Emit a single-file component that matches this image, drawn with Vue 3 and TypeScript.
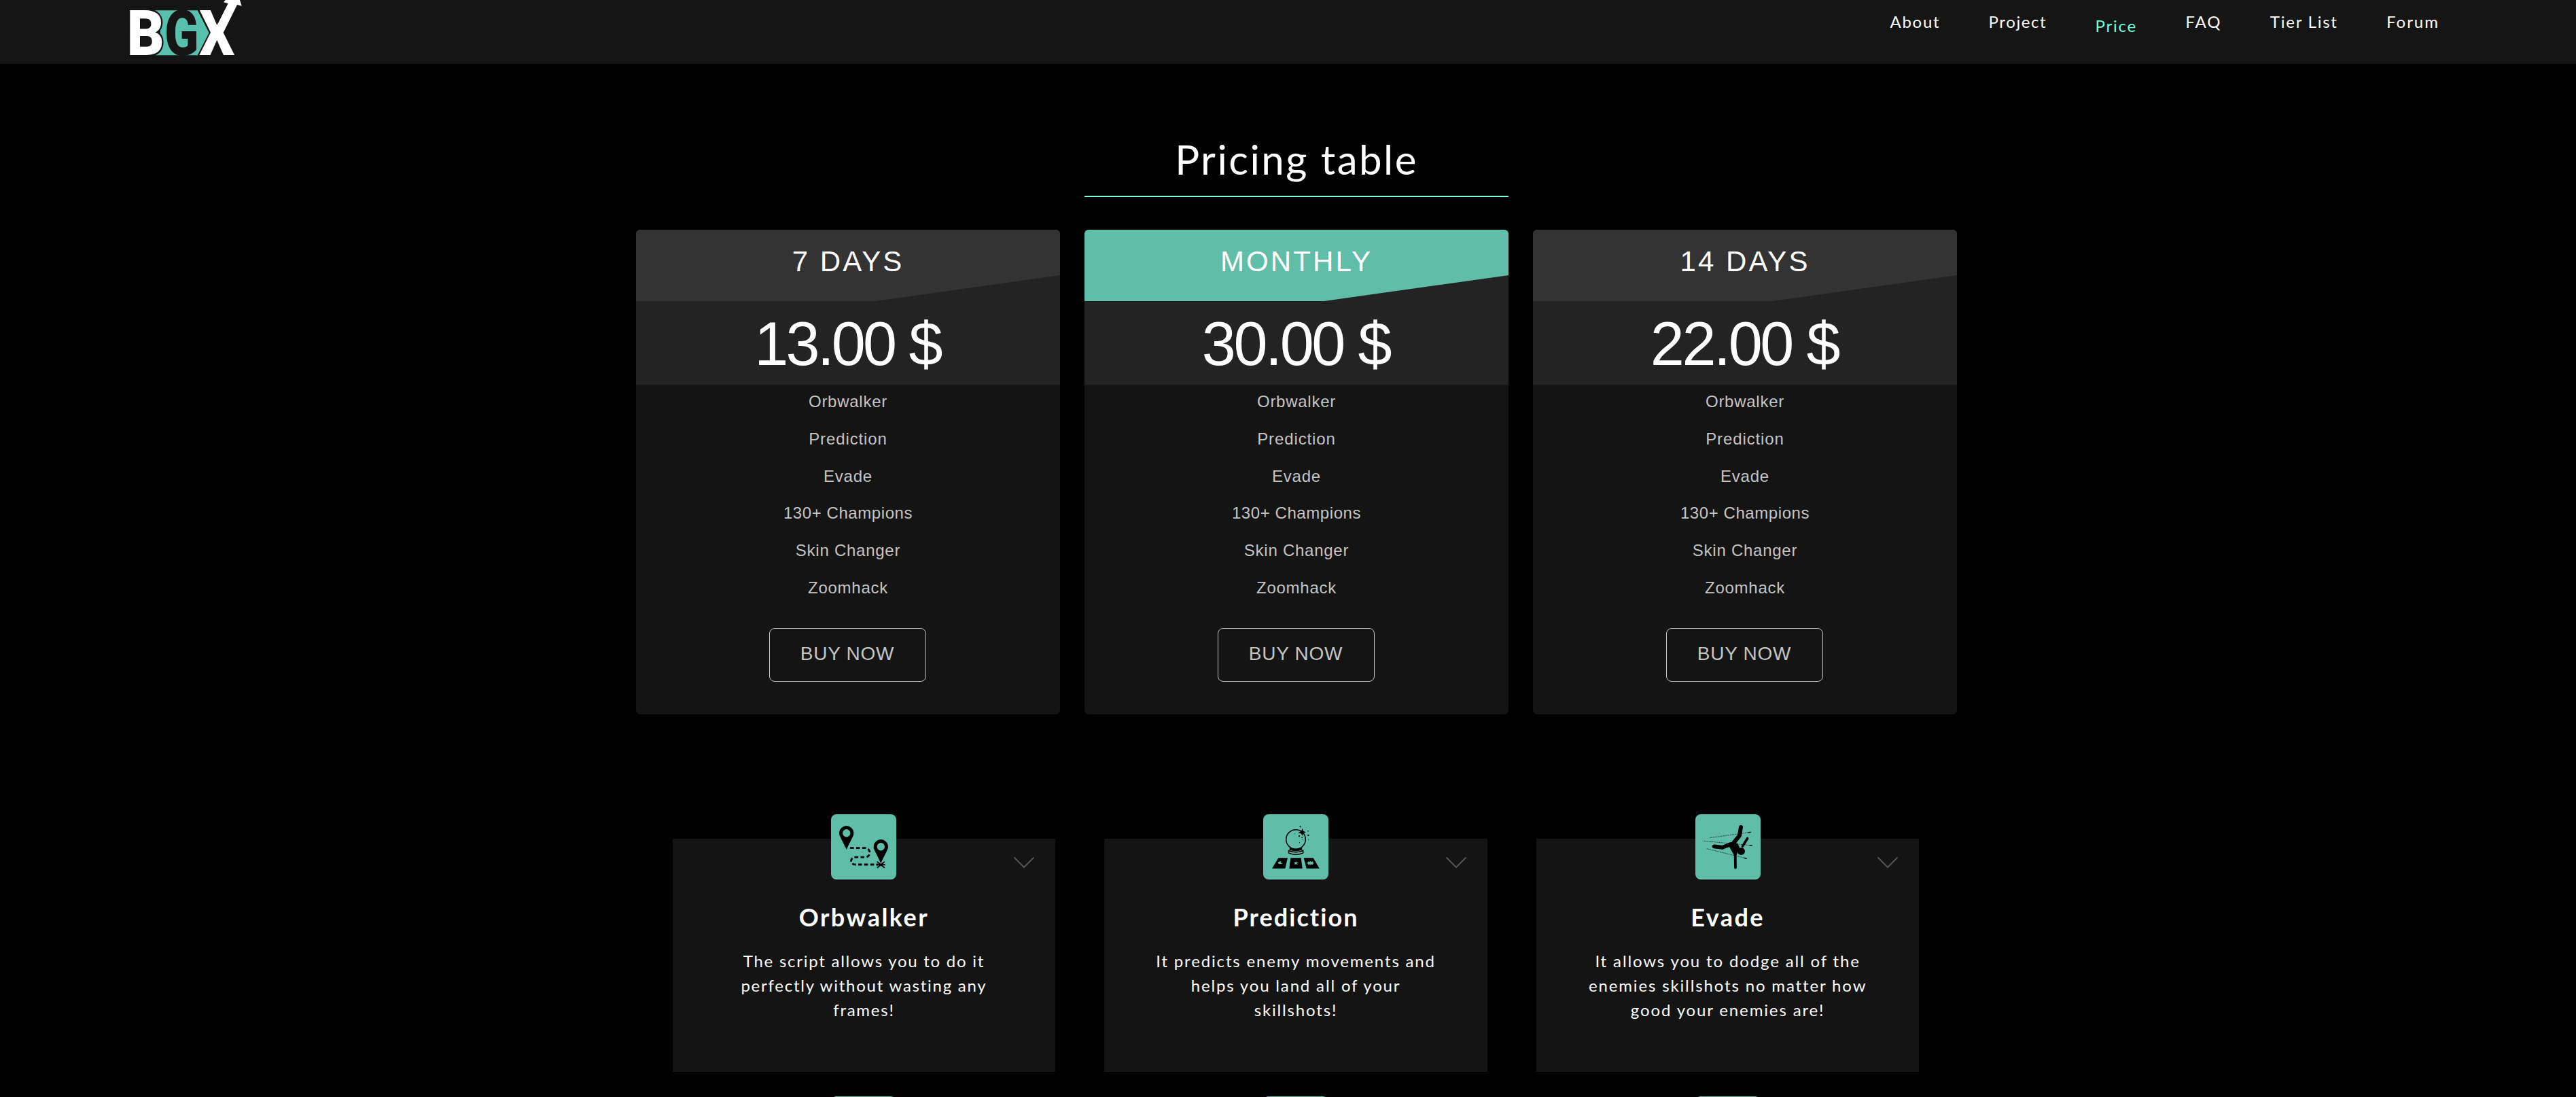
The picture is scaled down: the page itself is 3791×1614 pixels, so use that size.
<script setup lang="ts">
interface NavItem { label: string; spacing: number; active?: boolean }
interface Plan { name: string; price: string; nameSpacing: number; priceSpacing: number; featured?: boolean }
interface Perk { label: string; spacing: number }
interface Feature { icon: 'route' | 'oracle' | 'dodge'; title: string; lines: string[]; titleSpacing: number; spacing: number }

const nav: NavItem[] = [
  { label: 'About', spacing: 1.69 },
  { label: 'Project', spacing: 1.6 },
  { label: 'Price', spacing: 1.77, active: true },
  { label: 'FAQ', spacing: 2.0 },
  { label: 'Tier List', spacing: 1.76 },
  { label: 'Forum', spacing: 2.0 },
]

const plans: Plan[] = [
  { name: '7 DAYS', price: '13.00 $', nameSpacing: 3.05, priceSpacing: -3.8 },
  { name: 'MONTHLY', price: '30.00 $', nameSpacing: 3.13, priceSpacing: -3.4, featured: true },
  { name: '14 DAYS', price: '22.00 $', nameSpacing: 3.05, priceSpacing: -3.4 },
]

const perks: Perk[] = [
  { label: 'Orbwalker', spacing: 0.74 },
  { label: 'Prediction', spacing: 0.9 },
  { label: 'Evade', spacing: 0.74 },
  { label: '130+ Champions', spacing: 0.57 },
  { label: 'Skin Changer', spacing: 0.74 },
  { label: 'Zoomhack', spacing: 0.74 },
]

const features: Feature[] = [
  {
    icon: 'route', title: 'Orbwalker', titleSpacing: 2.47, spacing: 1.75,
    lines: ['The script allows you to do it', 'perfectly without wasting any', 'frames!'],
  },
  {
    icon: 'oracle', title: 'Prediction', titleSpacing: 2.07, spacing: 1.84,
    lines: ['It predicts enemy movements and', 'helps you land all of your', 'skillshots!'],
  },
  {
    icon: 'dodge', title: 'Evade', titleSpacing: 2.42, spacing: 1.86,
    lines: ['It allows you to dodge all of the', 'enemies skillshots no matter how', 'good your enemies are!'],
  },
]
</script>

<template>
  <div class="page">
    <header class="topbar">
      <svg class="logo" width="180" height="94" viewBox="0 0 180 94" aria-label="BGX">
        <path class="teal" d="M44 15.3H106.700L123.700 48.300L106.700 81.300H44L52 46Z" />
        <text class="mark dark" transform="translate(58.3 81.3) scale(.79 1)">G</text>
        <text class="mark light edged" transform="translate(2.7 81.3) scale(.917 1)">B</text>
        <path class="rim" d="M108.300 14L125 48.300L108.300 82.500" />
        <text class="mark light" transform="translate(109.300 81.300) scale(.875 1)">X</text>
        <path class="dark" d="M141 14H147.300L136 36.700Z" />
        <path class="light" d="M135.800 37L151.700 5L145 3.300L153 -6H167L171.700 8.700L165 7L144.700 47.700Z" />
      </svg>
      <nav class="nav">
        <a
          v-for="n in nav"
          :key="n.label"
          :class="{ active: n.active }"
          :style="{ letterSpacing: n.spacing + 'px' }"
        >{{ n.label }}</a>
      </nav>
    </header>

    <main>
      <h1 class="title">Pricing table</h1>

      <section class="plans">
        <article v-for="p in plans" :key="p.name" class="plan" :class="{ featured: p.featured }">
          <div class="plan-head">
            <h2 :style="{ letterSpacing: p.nameSpacing + 'px' }">{{ p.name }}</h2>
          </div>
          <div class="plan-price" :style="{ letterSpacing: p.priceSpacing + 'px' }">{{ p.price }}</div>
          <ul class="perks">
            <li v-for="k in perks" :key="k.label" :style="{ letterSpacing: k.spacing + 'px' }">{{ k.label }}</li>
          </ul>
          <button class="buy" type="button">BUY NOW</button>
        </article>
      </section>

      <section class="features">
        <article v-for="f in features" :key="f.title" class="feature">
          <div class="badge">
            <svg v-if="f.icon === 'route'" width="96" height="96" viewBox="0 0 96 96">
              <g fill-rule="evenodd">
                <path d="M22.700 51.800Q19.500 45 13.600 33.400A10.700 10.700 0 1 1 31.800 33.400Q25.900 45 22.700 51.800ZM22.700 22A5.700 5.700 0 1 0 22.700 33.400A5.700 5.700 0 1 0 22.700 22Z" />
                <path d="M73.300 72Q70.100 65 64.200 53.400A10.700 10.700 0 1 1 82.400 53.400Q76.500 65 73.300 72ZM73.300 42A5.700 5.700 0 1 0 73.300 53.400A5.700 5.700 0 1 0 73.300 42Z" />
              </g>
              <path class="line" stroke-width="2.800" stroke-dasharray="5.600 3.300" d="M28 49.700H50C59 49.700 59.500 63.200 50 63.200H36C27.500 63.200 27.500 74 36 74H69" />
              <path class="line" stroke-width="2" stroke-linecap="round" d="M68.500 70.300L78.200 78.300M78.200 70.300L68.500 78.300M67.500 74.200H79" />
            </svg>
            <svg v-else-if="f.icon === 'oracle'" width="96" height="96" viewBox="0 0 96 96">
              <circle class="line" cx="48" cy="37" r="14.300" stroke-width="1.500" />
              <path d="M39.500 48.500Q48 53.500 56.500 48.500L57.500 52.500Q48 56 38.300 52.500Z" />
              <path class="line" stroke-width="1.500" d="M37.500 53.500Q48 58 58.700 53.500V57Q48 61.500 37.500 57Z" />
              <path d="M22.300 64.300H36L32.300 79.700H13ZM40.300 64.300H55.700L57.700 79.700H38.300ZM59.700 64.300H73.700L82.700 79.700H63.700Z" />
              <path d="M57.700 20.800L58.900 24.600L62.800 26.400L59 27.900L57.500 32L56 28.500L51.500 27L55.800 25Z" />
              <path d="M54.700 16.800L55.300 17.700L56.200 18.300L55.300 18.900L54.700 19.800L54.100 18.900L53.200 18.300L54.100 17.700Z" />
              <g>
                <circle cx="53" cy="32" r="1.200" /><circle cx="66.400" cy="31" r="1.200" />
                <circle cx="66" cy="24.800" r=".8" /><circle cx="57.200" cy="34.400" r=".8" />
                <circle cx="66.700" cy="37.300" r=".5" /><circle cx="58" cy="37.300" r=".5" />
                <circle cx="53.400" cy="41.700" r=".6" /><circle cx="46.700" cy="28.700" r=".5" />
              </g>
              <g class="cut">
                <path d="M26.500 69.200Q21.300 69.300 21.700 71.600Q22.500 74 28.800 72.800Q24.800 71.800 26.500 69.200Z" />
                <path d="M48.200 69L49.200 70.800L52 71L49.800 72.300L50.800 74.200L48.200 73.200L45.700 74.200L46.700 72.300L44.600 71L47.300 70.800Z" />
                <path d="M66 69.500L68 70L69.500 69L71 70L73 69.500L73 71L75 72L73 73L73 74.200L71 73.700L69.500 74.500L68 73.700L66 74.200L66 73L64.500 72L65.500 71Z" />
              </g>
            </svg>
            <svg v-else width="96" height="96" viewBox="0 0 96 96">
              <g class="line" stroke-linecap="round" stroke-linejoin="round">
                <path stroke-width="6" d="M67 19L65 31.300L56 42.500" />
                <path stroke-width="5.800" d="M27.500 47.300L40 48.800L52 44" />
                <path stroke-width="3.800" d="M58.600 56L59 78.500" />
                <path stroke-width="3.600" d="M76.700 35.500L69.500 47" />
              </g>
              <path d="M48.500 45.500L54 41.300L62.300 43L65 48.500L60.600 60H56.800Z" />
              <circle cx="67.400" cy="54.400" r="5.500" />
              <g class="line" stroke-width=".9" stroke-dasharray="1.500 1" opacity=".75">
                <path d="M21 34.700L79 26.700" /><path d="M12.300 39.300L81 45.700" /><path d="M16.700 50.700L73 64.500" />
              </g>
              <path class="line" stroke-width="1.400" d="M77.500 27L81.700 26.300M79.500 45.600L83.700 46M71.500 64.300L75.700 65.200" />
            </svg>
          </div>
          <svg class="chevron" width="32" height="20" viewBox="0 0 32 20"><path d="M1.500 1.500L16 16L30.500 1.500" /></svg>
          <h3 :style="{ letterSpacing: f.titleSpacing + 'px' }">{{ f.title }}</h3>
          <p :style="{ letterSpacing: f.spacing + 'px' }">
            <span v-for="l in f.lines" :key="l">{{ l }}</span>
          </p>
        </article>
        <article v-for="i in 3" :key="i" class="feature"><div class="badge"></div></article>
      </section>
    </main>
  </div>
</template>

<style>
html, body { background: #000; margin: 0; overflow: hidden; }
</style>

<style scoped>
.page {
  width: 3791px;
  height: 1614px;
  overflow: hidden;
  background: #000;
  color: #fff;
  font-family: Lato, "Noto Sans", sans-serif;
}
.topbar {
  display: flex;
  justify-content: space-between;
  align-items: flex-start;
  height: 94px;
  padding: 0 201px 0 184px;
  box-sizing: border-box;
  background: #151515;
}
.logo { display: block; overflow: visible; }
.mark { font: 900 93px Roboto, "Liberation Sans", sans-serif; }
.teal { fill: #57c1ab; }
.light { fill: #fff; }
.dark { fill: #151515; }
.edged { stroke: #151515; stroke-width: 5px; paint-order: stroke; }
.rim { fill: none; stroke: #151515; stroke-width: 2px; }
.nav { display: flex; gap: 71.3px; font-size: 24px; line-height: 64px; }
.nav .active { color: #6fffe0; padding-top: 6px; }

main { width: 1944px; margin-left: 936px; }
.title {
  width: 624px;
  margin: 95px auto 48px;
  padding-bottom: 9px;
  border-bottom: 2px solid #7ffbe0;
  text-align: center;
  font-size: 60px;
  font-weight: 400;
  line-height: 90px;
  letter-spacing: 2.47px;
}
.plans { display: flex; gap: 36px; font-family: "Liberation Sans", Arial, sans-serif; }
.plan {
  width: 624px;
  height: 713px;
  border-radius: 6px;
  overflow: hidden;
  background: #141414;
  text-align: center;
}
.plan-head { height: 105px; background: #232323; }
.plan-head h2 {
  margin: 0;
  height: 105px;
  font-size: 42px;
  font-weight: 400;
  line-height: 93px;
  background: #333;
  clip-path: polygon(0 0, 100% 0, 100% 67px, 353px 100%, 0 100%);
}
.featured .plan-head h2 { background: #5fbda8; }
.plan-price { height: 123px; padding-right: 2px; background: #232323; font-size: 90px; line-height: 126px; }
.perks {
  display: flex;
  flex-direction: column;
  gap: 4.8px;
  margin: 0 0 34px;
  padding: 0;
  list-style: none;
  color: #c4c4c4;
  font-size: 24px;
  line-height: 50px;
}
.buy {
  width: 231px;
  height: 79px;
  margin-right: 2px;
  padding: 0 0 3px;
  border: 1px solid #c4c4c4;
  border-radius: 8px;
  background: none;
  color: #c4c4c4;
  font: 28px "Liberation Sans", Arial, sans-serif;
  letter-spacing: .74px;
}
.features {
  display: grid;
  grid-template-columns: repeat(3, 563.5px);
  gap: 72px 72.1px;
  margin: 183px 0 0 53.7px;
}
.feature {
  position: relative;
  height: 343px;
  padding-top: 90px;
  box-sizing: border-box;
  background: #141414;
  text-align: center;
}
.badge {
  position: absolute;
  top: -36px;
  left: calc(50% - 48px);
  width: 96px;
  height: 96px;
  border-radius: 8px;
  background: #5fbda8;
}
.badge svg { display: block; }
.line { fill: none; stroke: #000; }
.cut { fill: #5fbda8; }
.chevron { position: absolute; top: 26px; right: 30px; fill: none; stroke: #555; stroke-width: 2; }
.feature h3 { margin: 0; font-size: 36px; font-weight: 700; line-height: 50px; }
.feature p { margin: 22px 0 0; font-size: 24px; line-height: 36px; }
.feature p span { display: block; }
</style>
